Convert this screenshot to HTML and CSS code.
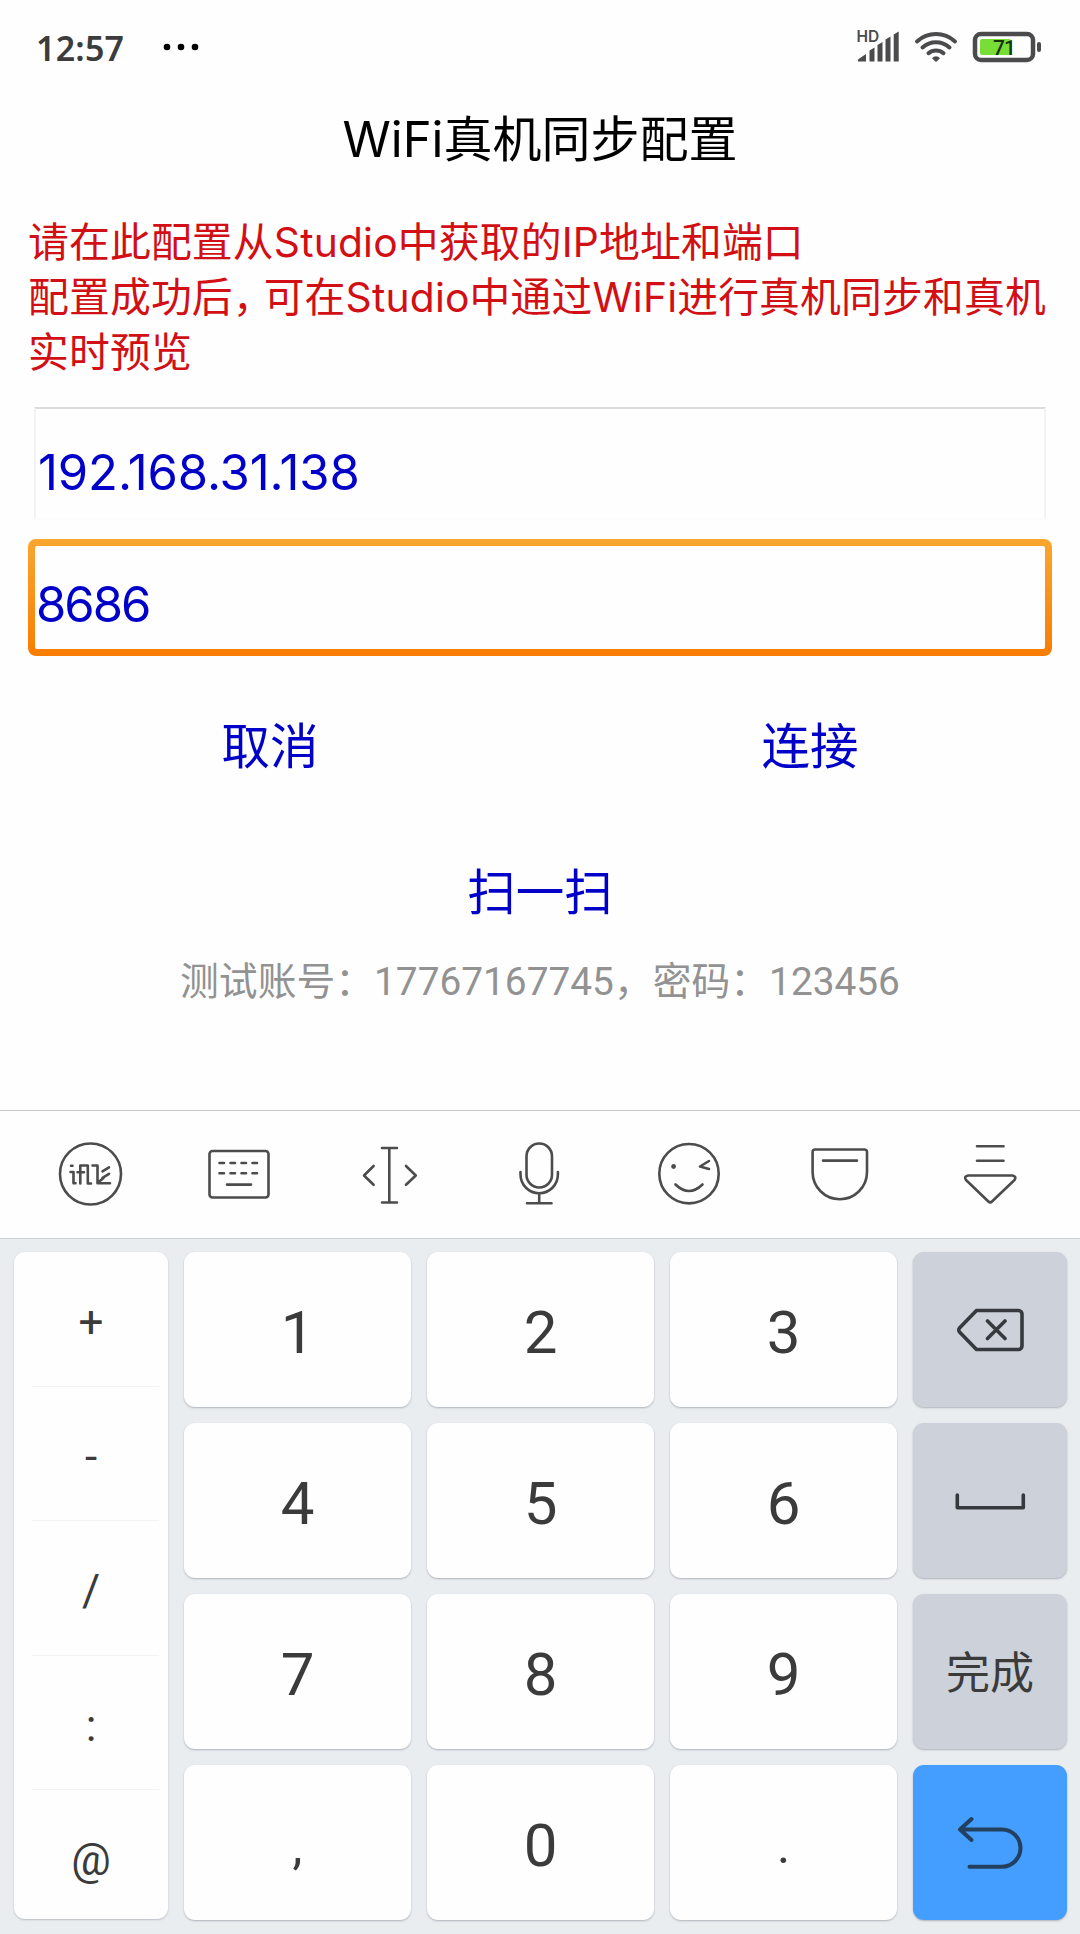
FILE: index.html
```html
<!DOCTYPE html>
<html lang="zh-CN">
<head>
<meta charset="utf-8">
<title>WiFi真机同步配置</title>
<link rel="stylesheet" href="styles.css">
</head>
<body>
<header class="status">
  <span class="clock">12:57</span>
  <svg class="more" width="36" height="10" viewBox="0 0 36 10"><circle cx="4" cy="5" r="3.3"/><circle cx="18" cy="5" r="3.3"/><circle cx="32" cy="5" r="3.3"/></svg>
  <svg class="status-icons" width="190" height="40" viewBox="855 27 190 40">
    <text class="hd" x="856.5" y="42">HD</text>
    <path d="M858 61.500v-2l8-5.500v7.500zM869.500 61.500V50.500l5-3v14zM877.500 61.500V45l5-3v19.500zM885.500 61.500V39.500l5-3v25zM893.700 61.500V34.500l5-3v30z"/>
    <g class="wave"><path d="M917 41.500a28 28 0 0 1 38 0"/><path d="M922.500 47.500a20 20 0 0 1 27 0"/><path d="M928.500 53.200a11.500 11.500 0 0 1 15 0"/></g>
    <path d="M936 62l-4-3.800a5 5 0 0 1 8 0z"/>
    <rect class="cell" x="975" y="34" width="58" height="26" rx="6"/>
    <rect class="charge" x="980" y="39" width="31" height="16" rx="2"/>
    <rect x="1037" y="42" width="4" height="10" rx="2"/>
    <text class="percent" x="993" y="55">71</text>
  </svg>
</header>

<main class="config">
  <h1 class="title">WiFi真机同步配置</h1>
  <p class="hint">请在此配置从Studio中获取的IP地址和端口<br>配置成功后<span class="comma">，</span>可在Studio中通过WiFi进行真机同步和真机<br>实时预览</p>
  <div class="field field-ip">192.168.31.138</div>
  <div class="field-focus"><div class="field-inner">8686</div></div>
  <div class="actions"><span>取消</span><span>连接</span></div>
  <div class="scan">扫一扫</div>
  <p class="account">测试账号：17767167745，密码：123456</p>
</main>

<nav class="toolbar">
  <svg viewBox="15 1111 150 127"><circle cx="90.500" cy="1174" r="30.500"/><path d="M71 1165.700h1.500M70.500 1172h3v11.300h2M80.300 1183.500v-18h7.500v18h3.200M77.500 1172.300h6.500M92.500 1165.500h5v17.800h12.500M102.500 1171.300l6.500-4M102.500 1177.800l6.500-4M98 1182.500l5.500-4.500"/></svg>
  <svg viewBox="165 1111 150 127"><rect x="209.500" y="1151" width="59" height="46.500" rx="3"/><path d="M219.500 1163h4.500m6.500 0h4.500m6.500 0h4.500m6.500 0h4.500M219.500 1173.200h4.500m6.500 0h4.500m6.500 0h4.500m6.500 0h4.500M227 1184.600h24"/></svg>
  <svg viewBox="315 1111 150 127"><path d="M382 1148h15M389.300 1148v54.500M382 1202.500h15M373.600 1166l-9.600 9.500 9.600 9.300M406 1166l9.800 9.500-9.800 9.300"/></svg>
  <svg viewBox="465 1111 150 127"><rect x="526.500" y="1143.500" width="25.500" height="44" rx="12.700"/><path d="M520.500 1172v2.500a18.700 18.700 0 0 0 37.400 0V1172M539.200 1193.500v9.500M527 1203.200h24.500"/></svg>
  <svg viewBox="615 1111 150 127"><circle cx="689" cy="1173.700" r="29.700"/><path d="M709 1161l-9 5.500 9 2.500M675.500 1184.500q13.500 13 27 0"/><circle class="dot" cx="673.600" cy="1166.500" r="2.400"/></svg>
  <svg viewBox="765 1111 150 127"><path d="M815 1149.500h49.500a2.500 2.500 0 0 1 2.500 2.500v20a27.200 27.200 0 0 1-54.400 0v-20a2.500 2.500 0 0 1 2.500-2.500zM823 1160.600h34"/></svg>
  <svg viewBox="915 1111 150 127"><path d="M977 1146.300h26.500M977 1160.700h26.500M968 1175.500h44.500q4.500 1 2 4.500l-22.500 21.500q-1.800 1.800-3.600 0L966 1180q-2.500-3.500 2-4.500z"/></svg>
</nav>

<section class="keyboard">
  <div class="symbols"><span>+</span><span>-</span><span>/</span><span>:</span><span>@</span></div>
  <div class="keys">
    <div class="key">1</div><div class="key">2</div><div class="key">3</div>
    <div class="key fn"><svg viewBox="913 1252 154 155"><path d="M976.500 1310.500h42a3.500 3.500 0 0 1 3.500 3.500v32a3.500 3.500 0 0 1-3.500 3.500h-42l-17-17.500q-1.500-2 0-4zM987.500 1321l17.500 17.500M1005 1321l-17.500 17.500"/></svg></div>
    <div class="key">4</div><div class="key">5</div><div class="key">6</div>
    <div class="key fn"><svg viewBox="913 1423 154 155"><path d="M957.300 1495v12.700h66V1495"/></svg></div>
    <div class="key">7</div><div class="key">8</div><div class="key">9</div>
    <div class="key fn done">完成</div>
    <div class="key punct">,</div><div class="key">0</div><div class="key punct">.</div>
    <div class="key enter"><svg viewBox="913 1765 154 155"><path d="M971.500 1819l-11.500 10.500 11.500 10.500M960 1829.500h42a18.500 18.600 0 0 1 0 37.200h-32.500"/></svg></div>
  </div>
</section>
</body>
</html>
```
FILE: styles.css
```css
* { box-sizing: border-box; }

body {
  margin: 0;
  width: 1080px;
  height: 1934px;
  display: flex;
  flex-direction: column;
  overflow: hidden;
  background: #fefefe;
  font-family: Inter, "Noto Sans CJK SC", sans-serif;
}

/* status bar */
.status {
  height: 94px;
  display: flex;
  align-items: center;
  padding: 0 35px 0 36px;
}
.clock {
  width: 127px;
  padding-top: 2px;
  font-family: "Noto Sans", sans-serif;
  font-size: 34px;
  font-weight: 600;
  letter-spacing: .2px;
  color: #3c3c3c;
}
.status-icons { margin-left: auto; fill: #4b4b4d; }
.wave { fill: none; stroke: #4b4b4d; stroke-width: 4; stroke-linecap: round; }
.cell { fill: none; stroke: #4b4b4d; stroke-width: 4.500; }
.charge { fill: #78dd36; }
.hd { font: 600 15.500px Inter, sans-serif; }
.percent { font: 500 21px Roboto, sans-serif; letter-spacing: -1px; fill: #17330c; }

/* configuration form */
.config {
  height: 1016px;
  display: flex;
  flex-direction: column;
  padding: 0 28px;
}
.title {
  margin: 0;
  height: 88px;
  line-height: 91px;
  font-size: 49px;
  font-weight: 400;
  text-align: center;
  color: #000;
}
.hint {
  margin: 33px 0 0;
  height: 165px;
  line-height: 55px;
  font-size: 40.800px;
  letter-spacing: .170px;
  white-space: nowrap;
  color: #d20f14;
}
.comma { letter-spacing: -10px; }
.field {
  height: 113px;
  margin: 27px 6px 0;
  border: 2px solid #f3f3f3;
  border-top-color: #dcdcdc;
  border-bottom-color: #fcfcfc;
  padding-left: 2px;
  line-height: 128px;
  font-size: 49px;
  letter-spacing: -.100px;
  color: #0000c8;
}
.field-focus {
  height: 117px;
  margin-top: 19px;
  padding: 7px;
  border-radius: 8px;
  background: linear-gradient(#f9a72f, #f97c02);
}
.field-inner {
  height: 103px;
  border-radius: 2px;
  background: #fefefe;
  padding-left: 1px;
  line-height: 117px;
  font-size: 49px;
  letter-spacing: -2px;
  color: #0000c8;
}
.actions {
  display: flex;
  margin: 51px -28px 0;
  line-height: 80px;
  font-size: 48.500px;
  color: #0000c8;
}
.actions span { flex: 1; text-align: center; }
.scan {
  margin-top: 66px;
  line-height: 80px;
  font-size: 48.500px;
  text-align: center;
  color: #0000c8;
}
.account {
  margin: 19px 0 0;
  line-height: 60px;
  font-family: Roboto, "Noto Sans CJK SC", sans-serif;
  font-size: 38.800px;
  font-weight: 400;
  text-align: center;
  white-space: nowrap;
  color: #929292;
}

/* input method toolbar */
.toolbar {
  height: 128px;
  display: flex;
  padding: 0 15px;
  border-top: 1px solid #c9c9c9;
}
.toolbar svg { width: 150px; height: 127px; }
.toolbar svg, .key svg {
  fill: none;
  stroke: #4c4c4c;
  stroke-width: 2.600;
  stroke-linecap: round;
  stroke-linejoin: round;
}
.toolbar .dot { fill: #4c4c4c; stroke: none; }

/* numeric keyboard */
.keyboard {
  height: 696px;
  display: flex;
  gap: 16px;
  padding: 13px 13px 15px 14px;
  border-top: 1px solid #cfd1d3;
  background: #e9edf0;
  font-family: Roboto, "Noto Sans CJK SC", sans-serif;
  color: #3b3b3b;
}
.symbols {
  width: 155px;
  height: 667px;
  display: flex;
  flex-direction: column;
  padding: 0 9px 0 18px;
  border-radius: 11px;
  background: #fefefe;
  box-shadow: 0 1px 2px #b9bdc4;
  font-size: 44px;
}
.symbols span {
  height: 134.500px;
  padding: 7px 9px 0 0;
  line-height: 127px;
  text-align: center;
  border-bottom: 1px solid #f3f3f3;
}
.symbols span:last-child { border: 0; }
.keys {
  display: grid;
  grid-template-columns: repeat(3, 227px) 154px;
  grid-template-rows: repeat(4, 154.500px);
  column-gap: 16px;
  row-gap: 16.500px;
}
.key {
  border-radius: 11px;
  background: #fefefe;
  box-shadow: 0 1px 2px #aeb3b9;
  padding-top: 4px;
  line-height: 154px;
  font-size: 60px;
  text-align: center;
}
.punct { font-size: 50px; }
.key svg { display: block; width: 154px; height: 155px; stroke: #36393d; stroke-width: 3.600; }
.fn { background: #cdd1da; }
.fn, .enter { padding: 0; }
.done { padding-top: 3px; font-size: 44px; font-weight: 400; }
.enter { background: #439eff; }
.key.enter svg { stroke: #24405f; stroke-width: 4; }
```
